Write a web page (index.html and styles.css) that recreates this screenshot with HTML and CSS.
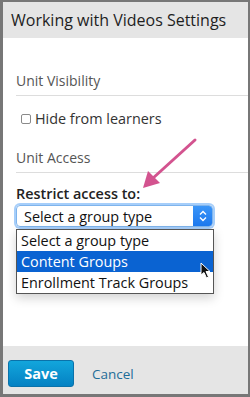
FILE: index.html
```html
<!DOCTYPE html>
<html lang="en">
<head>
  <meta charset="UTF-8" />
  <title>Working with Videos Settings</title>
  <meta name="viewport" content="width=device-width, initial-scale=1.0"/>
  <link rel="stylesheet" href="styles.css">
</head>
<body>

<div class="modal">
  <div class="modal-header">
    <h1>Working with Videos Settings</h1>
  </div>

  <div class="modal-body">
    <h3 class="section-title first">Unit Visibility</h3>
    <label class="check-row">
      <input type="checkbox" class="check">
      <span>Hide from learners</span>
    </label>

    <h3 class="section-title">Unit Access</h3>
    <div class="field-label">Restrict access to:</div>

    <div class="fake-select">
      <span>Select a group type</span>
      <span class="select-btn">
        <svg width="8" height="12" viewBox="0 0 8 12">
          <path d="M1 4.5 L4 1.5 L7 4.5 M1 7.5 L4 10.5 L7 7.5" fill="none" stroke="#fff" stroke-width="1.4"/>
        </svg>
      </span>
    </div>

    <ul class="options">
      <li>Select a group type</li>
      <li class="active">Content Groups</li>
      <li>Enrollment Track Groups</li>
    </ul>
  </div>

  <div class="modal-footer">
    <button class="btn-save">Save</button>
    <a class="btn-cancel" href="#">Cancel</a>
  </div>

  <!-- annotation arrow + mouse pointer drawn over the screenshot -->
  <svg class="callout" width="70" height="60" viewBox="0 0 70 60">
    <line x1="65" y1="4" x2="22" y2="43" stroke="#d3538f" stroke-width="3" stroke-linecap="round"/>
    <polygon points="13,52 18,35 30,47" fill="#d3538f"/>
  </svg>

  <svg class="pointer" width="12" height="17" viewBox="0 0 12 17">
    <path d="M1 1 L1 13 L4 10.5 L6.5 16 L8.5 15 L6 9.5 L10 9.5 Z" fill="#111" stroke="#fff" stroke-width="1"/>
  </svg>
</div>

</body>
</html>
```

FILE: styles.css
```css
body {
  margin: 0;
  font-family: 'Open Sans', sans-serif;
  background: #fff;
}

.modal {
  position: relative;
  box-sizing: border-box;
  height: 397px;
  border: solid #777;
  border-width: 2px 2px 3px 3px;
  display: flex;
  flex-direction: column;
  background: #fff;
}

.modal-header {
  background: #e5e5e5;
  height: 36px;
  padding-left: 8px;
  display: flex;
  align-items: center;
}

.modal-header h1 {
  margin: 0;
  font-size: 16px;
  font-weight: 400;
  color: #1e1e1e;
}

.modal-body {
  padding-left: 13px;
}

.section-title {
  margin: 20px 0 0;
  font-size: 14px;
  font-weight: 400;
  line-height: 20px;
  color: #555;
  padding-bottom: 4px;
  border-bottom: 1px solid #ddd;
}

.section-title.first {
  margin-top: 33px;
}

.check-row {
  display: flex;
  align-items: center;
  margin-top: 12px;
  height: 20px;
  font-size: 14.4px;
  color: #333;
}

.check {
  appearance: none;
  width: 10px;
  height: 10px;
  margin: 1px 4px 0 5px;
  border: 1px solid #8a8a8a;
  border-radius: 2px;
  background: #fff;
}

.field-label {
  margin-top: 11px;
  font-size: 14.4px;
  line-height: 20px;
  font-weight: 600;
  color: #222;
}

.fake-select {
  margin-top: 1px;
  width: 197px;
  height: 22px;
  box-sizing: border-box;
  border: 1px solid #7fb4ec;
  border-radius: 4px;
  box-shadow: 0 0 0 2px rgba(92, 166, 246, 0.55);
  display: flex;
  align-items: center;
  justify-content: space-between;
  font-size: 14.4px;
  color: #111;
  padding-left: 7px;
  overflow: hidden;
}

.select-btn {
  width: 19px;
  height: 100%;
  background: linear-gradient(#3a95f8, #1c78ee);
  display: flex;
  align-items: center;
  justify-content: center;
}

.options {
  list-style: none;
  margin: 2px 0 0;
  padding: 0;
  width: 198px;
  box-sizing: border-box;
  border: 1px solid #555;
  background: #fff;
  box-shadow: 0 4px 10px rgba(0, 0, 0, 0.18);
  font-size: 14.4px;
  color: #111;
}

.options li {
  height: 21px;
  line-height: 21px;
  padding-left: 4px;
}

.options li.active {
  background: #0a63d2;
  color: #fff;
}

.modal-footer {
  margin-top: auto;
  height: 48px;
  box-sizing: border-box;
  background: #e5e5e5;
  padding: 14px 0 0 5px;
  display: flex;
  align-items: flex-start;
}

.btn-save {
  width: 66px;
  height: 27px;
  border: 1px solid #0a72aa;
  border-radius: 3px;
  background: linear-gradient(#12a6dc, #0581c3);
  color: #fff;
  font-family: 'Open Sans', sans-serif;
  font-weight: 700;
  font-size: 14.5px;
}

.btn-cancel {
  margin: 5px 0 0 18px;
  font-size: 13.5px;
  color: #1e6d98;
  text-decoration: none;
}

.callout {
  position: absolute;
  left: 127px;
  top: 134px;
}

.pointer {
  position: absolute;
  left: 197px;
  top: 260px;
}
```
